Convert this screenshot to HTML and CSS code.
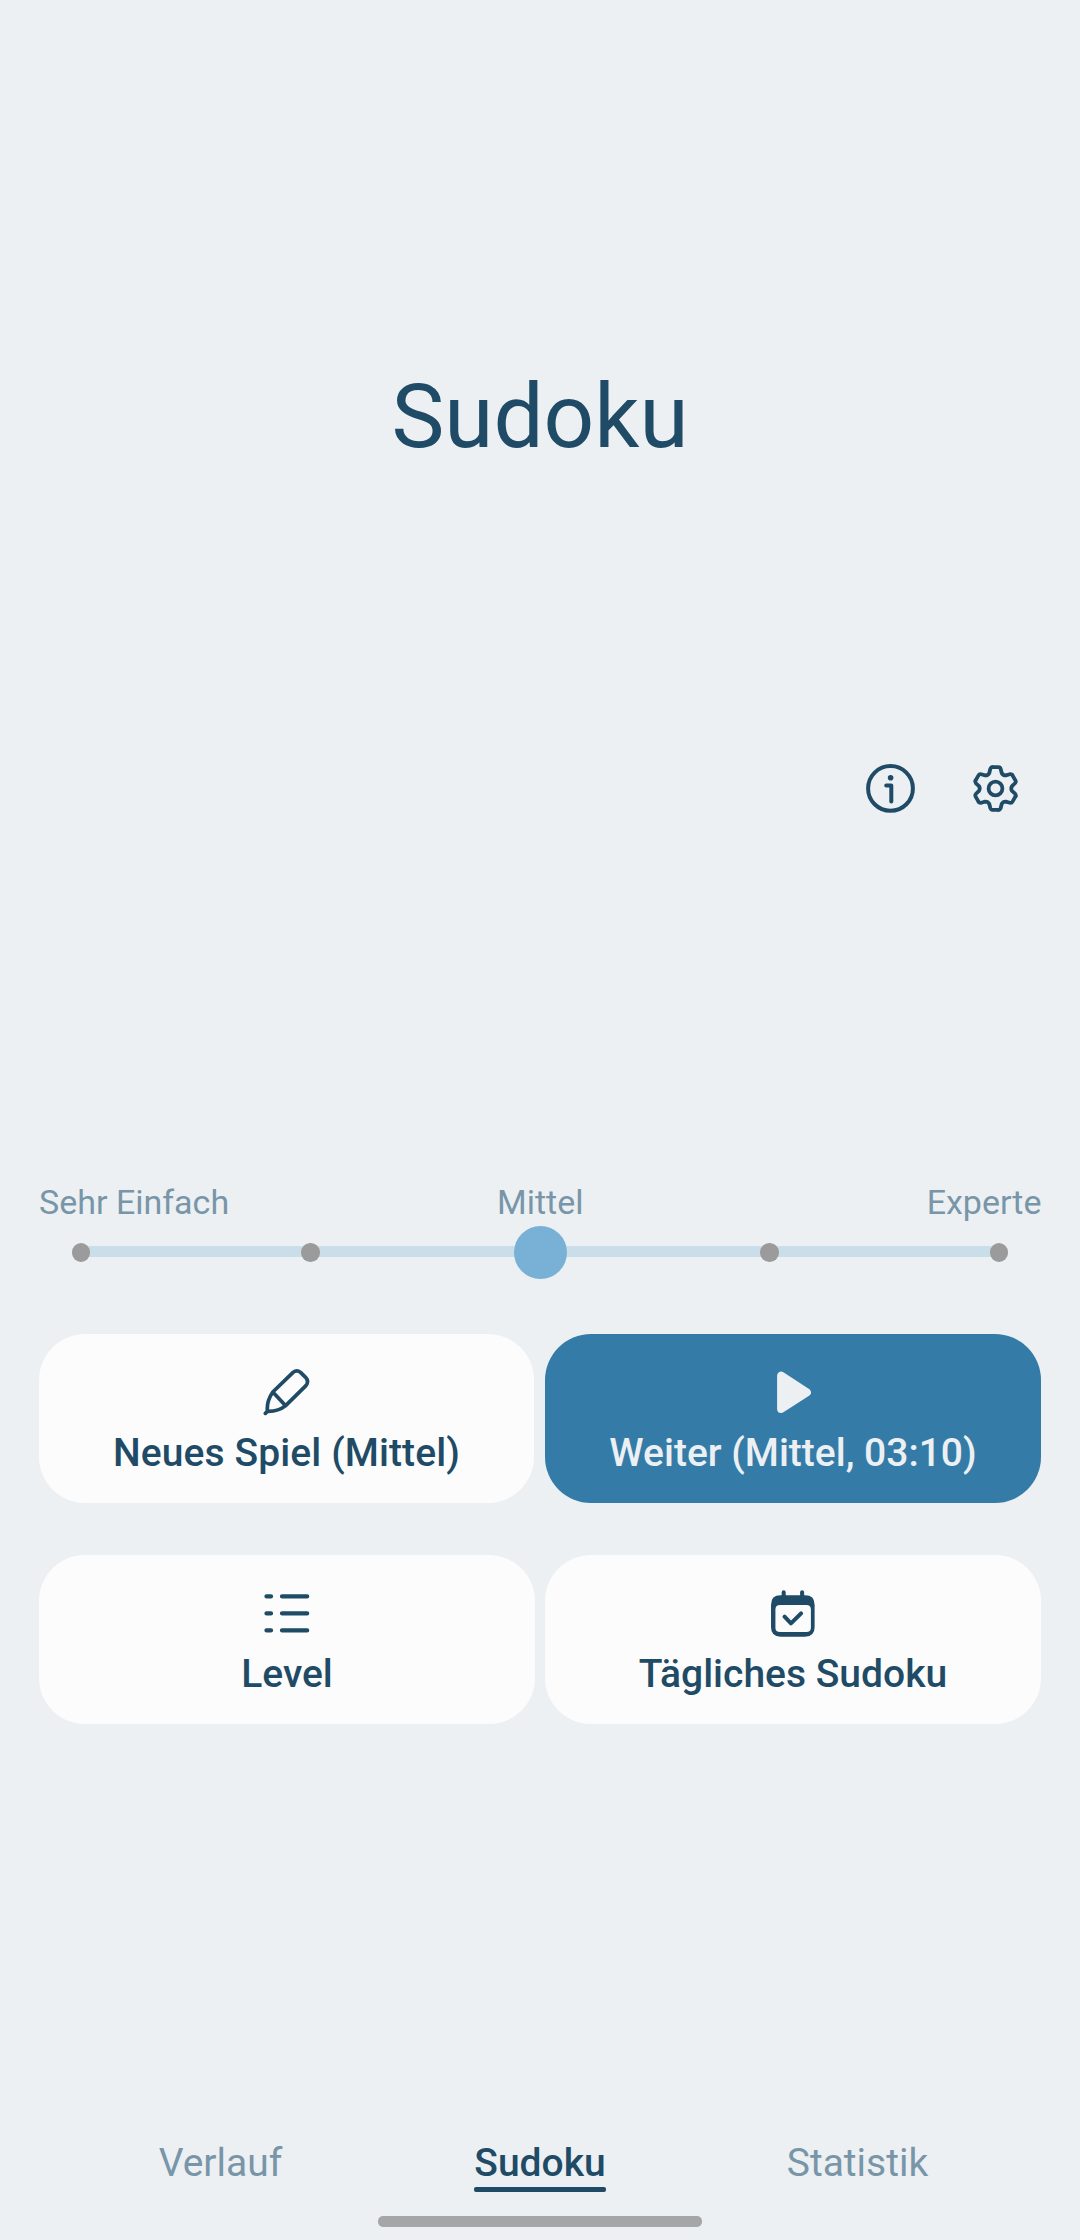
FILE: index.html
```html
<!DOCTYPE html>
<html lang="de">
<head>
<meta charset="utf-8">
<title>Sudoku</title>
<link rel="stylesheet" href="styles.css">
</head>
<body>
<main class="screen">
  <h1 class="title">Sudoku</h1>

  <div class="toolbar">
    <svg class="tool" viewBox="0 0 50 50" fill="none" stroke="currentColor" stroke-width="4" stroke-linecap="round" stroke-linejoin="round" role="img" aria-label="Info">
      <circle cx="25.5" cy="25.4" r="22.4"/>
      <path d="M21.2 22.4H26.3V38.5"/>
      <circle cx="25.600" cy="14.8" r="2.8" fill="currentColor" stroke="none"/>
    </svg>
    <svg class="tool" viewBox="-25.5 -25.5 50 50" fill="none" stroke="currentColor" stroke-width="3.8" stroke-linecap="round" stroke-linejoin="round" role="img" aria-label="Einstellungen">
      <defs><path id="tooth" d="M-3.2-21.3H3.2Q4.6-21.3 5.2-19.5L6.2-15.5Q7.5-13 10.3-13.1L14.3-14.3Q16.1-14.6 16.85-13.42"/></defs>
      <use href="#tooth"/>
      <use href="#tooth" transform="rotate(60)"/>
      <use href="#tooth" transform="rotate(120)"/>
      <use href="#tooth" transform="rotate(180)"/>
      <use href="#tooth" transform="rotate(240)"/>
      <use href="#tooth" transform="rotate(300)"/>
      <circle r="6.9"/>
    </svg>
  </div>

  <section class="difficulty">
    <div class="labels"><span>Sehr Einfach</span><span class="middle">Mittel</span><span class="end">Experte</span></div>
    <div class="slider">
      <i class="dot"></i><i class="dot"></i><i class="thumb"></i><i class="dot"></i><i class="dot"></i>
    </div>
  </section>

  <section class="cards">
    <div class="card new-game">
      <svg class="icon" preserveAspectRatio="none" viewBox="717 143 144 144" fill="none" stroke="currentColor" stroke-width="11" stroke-linecap="round" stroke-linejoin="round"><path d="M749 215L809 156Q820 147 831 156L846 171Q857 183 847 196L787 256Q765 274 733 273Q730 243 749 215L787 256M733 273L727 279"/></svg>
      <span>Neues Spiel (Mittel)</span>
    </div>
    <div class="card primary">
      <svg class="icon" preserveAspectRatio="none" viewBox="707 143 144 144" fill="currentColor" stroke="currentColor" stroke-width="24" stroke-linejoin="round"><path d="M743 166V266L819 216Z"/></svg>
      <span>Weiter (Mittel, 03:10)</span>
    </div>
    <div class="card lower">
      <svg class="icon" preserveAspectRatio="none" viewBox="718 146 144 144" fill="none" stroke="currentColor" stroke-width="13" stroke-linecap="round"><path d="M728.5 168H741.5M774.5 168H848.5M728.5 219H741.5M774.5 219H848.5M728.5 270H741.5M774.5 270H848.5"/></svg>
      <span>Level</span>
    </div>
    <div class="card lower">
      <svg class="icon" preserveAspectRatio="none" viewBox="706 146 144 144" fill="none" stroke="currentColor" stroke-width="12" stroke-linecap="round" stroke-linejoin="round">
        <path fill="currentColor" fill-rule="evenodd" stroke="none" d="M740 165H813Q841 165 841 193V261Q841 289 813 289H740Q712 289 712 261V193Q712 165 740 165ZM739 194Q725 194 725 207V262Q725 275 739 275H816Q830 275 830 262V207Q830 194 816 194Z"/>
        <path d="M749.500 156V168M804 156V168M752 229L771 249L801 219"/>
      </svg>
      <span>Tägliches Sudoku</span>
    </div>
  </section>

  <nav class="tabs">
    <span class="tab">Verlauf</span>
    <span class="tab active">Sudoku</span>
    <span class="tab">Statistik</span>
  </nav>
  <div class="home"></div>
</main>
</body>
</html>
```
FILE: styles.css
```css
* { box-sizing: border-box; }
body {
  margin: 0;
  background: #ecf0f3;
  color: #1f4b66;
  font-family: Roboto, sans-serif;
}
.screen {
  display: flex;
  flex-direction: column;
  width: 1080px;
  height: 2240px;
  padding-top: 365px;
  overflow: hidden;
}
.title {
  margin: 0;
  font-size: 89px;
  line-height: 104px;
  font-weight: 400;
  text-align: center;
}
.toolbar {
  display: flex;
  justify-content: flex-end;
  gap: 55px;
  margin-top: 294px;
  padding-right: 60px;
}
.tool { width: 50px; height: 50px; }
.difficulty { margin-top: 369px; padding: 0 38.500px 0 39px; }
.labels {
  display: grid;
  grid-template-columns: 1fr 1fr 1fr;
  color: #7896a8;
  font-size: 34px;
  line-height: 40px;
}
.middle { text-align: center; }
.end { text-align: right; }
.slider {
  display: flex;
  justify-content: space-between;
  align-items: center;
  height: 53px;
  margin: 4px 33.250px 0 32.750px;
  background: linear-gradient(#c9dee9, #c9dee9) center 20px / 918px 11px no-repeat;
}
.dot { width: 18.500px; height: 18.500px; border-radius: 50%; background: #9b9b9b; }
.thumb { width: 53px; height: 53px; margin: 0 -17.250px; border-radius: 50%; background: #79b1d6; }
.cards {
  display: grid;
  grid-template-columns: 1fr 1fr;
  gap: 52.500px 10px;
  margin-top: 55.300px;
  padding: 0 39px;
}
.card {
  display: flex;
  flex-direction: column;
  align-items: center;
  height: 168.400px;
  padding-top: 33.300px;
  border-radius: 46px;
  background: #fcfcfc;
  font-size: 39px;
  line-height: 46px;
  font-weight: 500;
}
.card span { margin-top: 14px; white-space: nowrap; }
.new-game { margin-right: 1px; letter-spacing: 0.100px; }
.lower { padding-top: 34px; }
.primary { background: #347ca7; color: #ecf0f3; }
.icon { width: 48.670px; height: 48px; }
.tabs {
  display: flex;
  justify-content: center;
  margin-top: 416.400px;
  font-size: 39px;
  line-height: 46px;
  color: #7896a8;
}
.tab { width: 318.500px; padding-right: 2px; text-align: center; }
.active {
  padding-right: 0;
  color: #1f4b66;
  font-weight: 500;
}
.active::after {
  content: "";
  display: block;
  width: 132px;
  height: 5px;
  margin: 1px auto 0;
  border-radius: 2px;
  background: currentColor;
}
.home {
  width: 324px;
  height: 11px;
  margin: 24px auto 0;
  border-radius: 5px;
  background: #a5a6a8;
}
```
